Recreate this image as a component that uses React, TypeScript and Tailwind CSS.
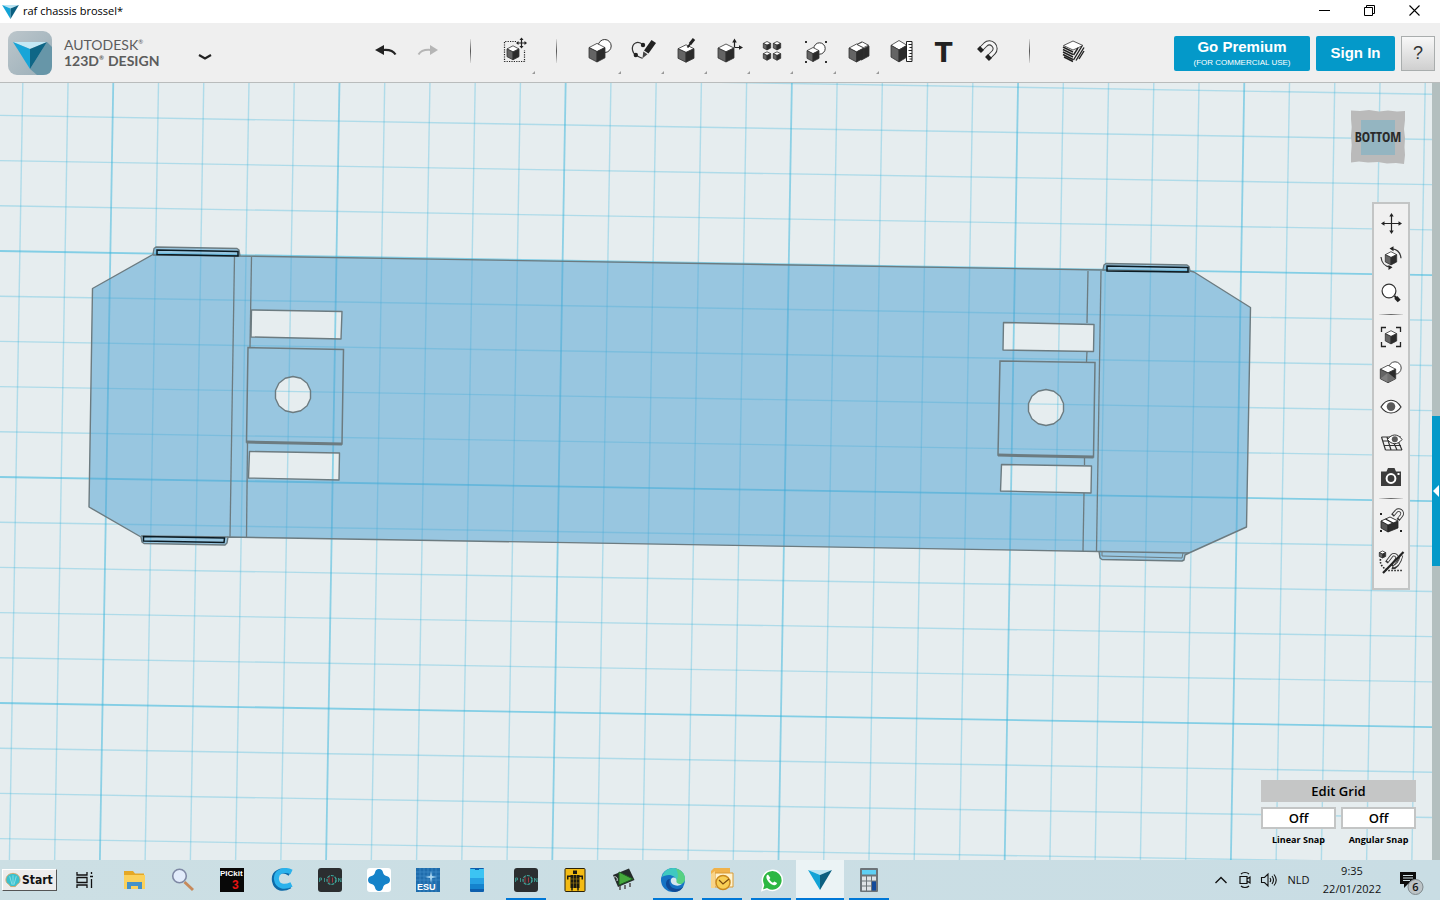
import React from "react";

const SANS = "font-['Open_Sans','Noto_Sans',sans-serif]";

type Pt = [number, number];
const pts = (p: Pt[]) => p.map(q => q.join(",")).join(" ");

function Icon({ children }: { children: React.ReactNode }) {
  return (
    <svg width="32" height="32" viewBox="0 0 32 32" fill="none" aria-hidden="true">
      {children}
    </svg>
  );
}

function TaskIcon({ children }: { children: React.ReactNode }) {
  return (
    <svg width="24" height="24" viewBox="0 0 24 24" fill="none" aria-hidden="true">
      {children}
    </svg>
  );
}

function Cube({ x, y, r, h }: { x: number; y: number; r: number; h: number }) {
  const up = y - h * 0.55;
  const down = y + h * 0.55;
  const mid = y - h * 0.12;
  return (
    <g stroke="#333" strokeWidth="0.8" strokeLinejoin="round">
      <polygon fill="#fff" points={pts([[x, y - h], [x + r, up], [x, mid], [x - r, up]])} />
      <polygon fill="#646464" points={pts([[x - r, up], [x, mid], [x, y + h], [x - r, down]])} />
      <polygon fill="#2b2b2b" points={pts([[x + r, up], [x, mid], [x, y + h], [x + r, down]])} />
    </g>
  );
}

function Logo() {
  return (
    <g>
      <polygon points="0,0 24,0 12,5" fill="#b9e4f3" />
      <polygon points="0,0 12,5 12,20" fill="#13a3d6" />
      <polygon points="24,0 12,5 12,20" fill="#0b5f80" />
    </g>
  );
}

function Magnet() {
  return (
    <g>
      <path d="M9 15 14.500 9.500A5.660 5.660 0 0 1 22.500 17.500L17 23" stroke="#3a3a3a" strokeWidth="5.200" />
      <path d="M9 15 14.500 9.500A5.660 5.660 0 0 1 22.500 17.500L17 23" stroke="#f6f6f6" strokeWidth="3.200" />
      <path d="m8 16 3-3M16 24l3-3" stroke="#222" strokeWidth="5.600" />
    </g>
  );
}

const tools = [
  {
    name: "Undo",
    icon: (
      <>
        <path d="M6 15 15 10v10z" fill="#222" />
        <path d="M14 15c6-.6 10 .4 12.500 4.500" stroke="#222" strokeWidth="2.200" />
      </>
    ),
  },
  {
    name: "Redo",
    icon: (
      <>
        <path d="M26 15 18 10v10z" fill="#b5b5b5" />
        <path d="M19 15c-6-.6-10 .4-12.500 4.500" stroke="#b5b5b5" strokeWidth="2" />
      </>
    ),
  },
  { name: "" },
  {
    name: "Transform",
    more: true,
    icon: (
      <>
        <path d="M18 6.500H6.500v20h20V15" stroke="#222" strokeWidth="1.200" strokeDasharray="1.200 1.200" />
        <Cube x={15} y={17.800} r={6} h={7} />
        <path d="M23.500 3.500v9M19 8h9" stroke="#222" strokeWidth="1.200" />
        <path d="m23.500 2.500 2 2.500h-4zM23.500 13.500l2-2.500h-4zM18 8l2.500-2v4zM29 8l-2.500-2v4z" fill="#222" />
      </>
    ),
  },
  { name: "" },
  {
    name: "Primitives",
    more: true,
    icon: (
      <>
        <circle cx="20.700" cy="11" r="6.500" fill="#fff" stroke="#333" />
        <Cube x={13} y={17.700} r={8} h={9.300} />
      </>
    ),
  },
  {
    name: "Sketch",
    more: true,
    icon: (
      <>
        <path d="M16 10C11 5 4.500 8 5.500 15c.6 3.500 2 4.500 4 5.500 3 1.500 5 3 6 2.500" stroke="#333" strokeWidth="1.200" />
        <circle cx="16" cy="10" r="2.200" fill="#222" />
        <circle cx="8.800" cy="20" r="2.200" fill="#222" />
        <path d="m24.500 5 4.500 3-7.500 10.500-4.500-3z" fill="#222" />
        <path d="m16.300 16.500 4.200 2.800-5 4z" fill="#444" />
      </>
    ),
  },
  {
    name: "Construct",
    more: true,
    icon: (
      <>
        <Cube x={16} y={18.500} r={8} h={8.700} />
        <path d="M24 4 20 9" stroke="#222" strokeWidth="3" />
        <path d="m20.500 8.500-3 4" stroke="#222" strokeWidth="1.800" />
      </>
    ),
  },
  {
    name: "Modify",
    more: true,
    icon: (
      <>
        <Cube x={13} y={18} r={8} h={9} />
        <path d="M21.500 12.500V6M21.500 12.500H27" stroke="#222" strokeWidth="1.200" />
        <path d="m21.500 3.500 2.300 4h-4.600zM30 12.500l-4-2.300v4.600z" fill="#222" />
      </>
    ),
  },
  {
    name: "Pattern",
    more: true,
    icon: (
      <>
        <Cube x={11} y={10.700} r={3.700} h={4.200} />
        <Cube x={21} y={10.700} r={3.700} h={4.200} />
        <Cube x={11} y={21} r={3.700} h={4.200} />
        <Cube x={21} y={21} r={3.700} h={4.200} />
      </>
    ),
  },
  {
    name: "Grouping",
    more: true,
    icon: (
      <>
        <path d="M6 6h2v2H6zM26 6h2v2h-2zM6 26h2v2H6zM26 26h2v2h-2z" fill="#333" />
        <circle cx="20.500" cy="13.500" r="5.700" fill="#fff" stroke="#333" />
        <Cube x={14} y={19.500} r={6} h={7} />
      </>
    ),
  },
  {
    name: "Combine",
    more: true,
    icon: (
      <>
        <Cube x={19.500} y={16} r={7.500} h={9} />
        <Cube x={14.500} y={18} r={7.500} h={9} />
        <path d="m15 9.500 5.500-2.500 6 3.200-5 2.500z" fill="#fff" stroke="#333" strokeWidth=".8" />
      </>
    ),
  },
  {
    name: "Measure",
    icon: (
      <>
        <Cube x={14} y={16.200} r={8} h={10.700} />
        <path d="M21.500 6.500h5.500v20h-5.500z" fill="#fff" stroke="#222" />
        <path d="M23.500 9.500H27M24.500 12.500H27M23.500 15.500H27M24.500 18.500H27M23.500 21.500H27M24.500 24H27" stroke="#222" />
      </>
    ),
  },
  { name: "Text", glyph: "T" },
  { name: "Snap", icon: <Magnet /> },
  { name: "" },
  {
    name: "Material",
    icon: (
      <>
        <path d="m16 5.500 10.500 5v10.500L16 27 6 21V10.500z" fill="#efefef" />
        <path d="m16 6 10 4.500L16 15 6.500 10.500z" fill="#fff" stroke="#333" strokeWidth=".8" />
        <path d="m6 12 10 5M6 14.500l10 5M6 17l10 5M6 19.500l10 5M7 22l9 4.500" stroke="#222" strokeWidth="1.400" />
        <path d="m16.500 20 4.500-7M16.500 25 25 11M19 25.500l8-13M22 24l5-8" stroke="#222" strokeWidth="1.400" />
      </>
    ),
  },
];

const navTools = [
  {
    name: "Pan",
    icon: (
      <>
        <path d="M16.500 8v17M8 16.500h17" stroke="#222" strokeWidth="1.200" />
        <path d="m16.500 6 2.200 3.500h-4.400zM16.500 27l2.200-3.500h-4.400zM6 16.500l3.500-2.200v4.400zM27 16.500l-3.500-2.200v4.400z" fill="#222" />
      </>
    ),
  },
  {
    name: "Orbit",
    icon: (
      <>
        <Cube x={16} y={16.300} r={5.700} h={6.600} />
        <path d="M17 6.800c5 .4 8.500 4 9 9.500M6 15c.5 5.500 4 9.500 9 10" stroke="#333" strokeWidth="1.200" />
        <path d="m14.500 6.600 4-2.300v5zM17.500 25.200l-4-2.300v5z" fill="#222" />
      </>
    ),
  },
  {
    name: "Zoom",
    icon: (
      <>
        <path d="m19.500 19 2 2" stroke="#222" strokeWidth="2" />
        <path d="m20.800 20.300 3.400 3.700" stroke="#222" strokeWidth="4" />
        <circle cx="14" cy="14" r="6.900" fill="#fff" stroke="#333" strokeWidth="1.200" />
      </>
    ),
  },
  { name: "" },
  {
    name: "Fit",
    icon: (
      <>
        <path d="M6.500 11V6.500H11M21 6.500h4.500V11M25.500 21v4.500H21M11 25.500H6.500V21" stroke="#222" strokeWidth="1.300" />
        <Cube x={16} y={16.300} r={5.700} h={6.600} />
      </>
    ),
  },
  {
    name: "View mode",
    icon: (
      <>
        <circle cx="20" cy="12" r="6.200" fill="#fff" stroke="#444" />
        <Cube x={13} y={18} r={7.700} h={8.700} />
        <path d="m13 16.800 7.500 6L13 26.500l-7.500-4z" fill="#8c8c8c" opacity=".7" />
      </>
    ),
  },
  {
    name: "Visibility",
    icon: (
      <>
        <path d="M6 16c5.500-9 14.500-9 20 0-5.500 8-14.500 8-20 0z" fill="#fff" stroke="#333" strokeWidth="1.200" />
        <circle cx="16" cy="15.600" r="4.300" fill="#5a5a5a" />
      </>
    ),
  },
  {
    name: "Grid visibility",
    icon: (
      <>
        <path d="M6.500 11H26M7.500 15H25M9 19.500h17M10.500 24H27M6.500 11l4 13M12 11l4 13M18 15l4 9M23 15l4 9" stroke="#333" strokeWidth="1.200" />
        <path d="M12.500 13.500c4-6 10.500-6 14.500 0-4 5.500-10.500 5.500-14.500 0z" fill="#fff" stroke="#333" />
        <circle cx="19.800" cy="13.200" r="3" fill="#5a5a5a" />
      </>
    ),
  },
  {
    name: "Screenshot",
    icon: (
      <>
        <path d="M6 10.500h5.500L13 7h6.500l1.500 3.500h5V25H6z" fill="#3c3c3c" />
        <circle cx="16" cy="17.500" r="4.400" stroke="#fff" strokeWidth="2" />
        <path d="M22.500 12h2v2h-2z" fill="#fff" />
      </>
    ),
  },
  { name: "" },
  {
    name: "Snap to object",
    icon: (
      <>
        <path d="M5 8h2v2H5zM5 25h2v2H5zM25 25h2v2h-2z" fill="#222" />
        <path d="m6 16 7 4v7l-7-4z" fill="#555" stroke="#222" strokeWidth=".8" />
        <path d="m13 20 10-4v7l-10 4z" fill="#2b2b2b" stroke="#222" strokeWidth=".8" />
        <path d="m6 16 9-4 8 4-10 4z" fill="#fff" stroke="#222" strokeWidth=".9" />
        <path d="m10.500 14 7.500 4" stroke="#222" strokeWidth="1.200" />
        <path d="m17.500 10.500 3.500-4A3.300 3.300 0 0 1 26.500 10.500L23 15" stroke="#333" strokeWidth="3.600" />
        <path d="m18.500 9.500 2.500-3A3.300 3.300 0 0 1 26.500 10.500L24 13.700" stroke="#f0f0f0" strokeWidth="1.900" />
      </>
    ),
  },
  {
    name: "Snap off",
    icon: (
      <>
        <Cube x={7.500} y={8.500} r={3.200} h={3.500} />
        <path d="M5.500 13c-1 6 3 9.500 8 11.500H27" stroke="#222" strokeWidth="1.600" strokeDasharray="1.600 1.400" />
        <path d="m11.500 16.500 5-6.500a3 3 0 0 1 5 3.500L17 20M17 21.500c3 1 8-4 9.500-12" stroke="#333" strokeWidth="3.400" />
        <path d="m12.500 15.200 4-5.200a3 3 0 0 1 5 3.500L18 18.500M18.500 20.800c3-1 6.500-5 8-10.800" stroke="#f0f0f0" strokeWidth="1.700" />
        <path d="M28.500 6 8 27" stroke="#222" strokeWidth="2.200" />
      </>
    ),
  },
];

const EDGE = "#6c7b80";

const holes: Pt[][] = [
  [[251.5, 310], [342, 311.5], [341, 339], [251, 337]],
  [[249.5, 451.5], [339.5, 453], [339, 480], [248.5, 478]],
  [[1003.5, 322.5], [1094, 324.5], [1093.5, 351.5], [1003, 350]],
  [[1001.5, 464.5], [1091.5, 466], [1091, 493], [1000.5, 491]],
  round(293, 394.5),
  round(1046, 407.5),
];

const plates: Pt[][] = [
  [[248, 347.5], [343.5, 349.5], [342, 444], [246.5, 442]],
  [[1000, 361], [1095, 362.5], [1093.5, 457], [998, 455]],
];

const outline: Pt[] = [
  [92.5, 288.5], [153, 254.5], [154, 248.5], [156, 247], [237, 248.5], [239, 250], [240, 256], [1103, 270],
  [1104, 265], [1106, 263.5], [1187, 265], [1189, 266.5], [1190, 271], [1194, 272], [1250.5, 307.5], [1246.5, 527],
  [1189, 553], [1185, 555], [1184, 560], [1182, 561], [1102, 559.5], [1100, 558], [1099, 551.5], [228, 537],
  [227, 543], [225, 545], [144, 543.5], [142, 542], [141, 537], [89, 507],
];

const seams: Pt[][] = [
  [[153, 255], [240, 256]], [[141, 536], [228, 537]], [[1103, 270], [1190, 272]], [[1099, 551.5], [1189, 553]],
  [[234.5, 256], [230, 537]], [[251.5, 257], [250, 348]], [[247.5, 443], [246.5, 537]],
  [[1088, 271], [1087, 323]], [[1087, 351], [1086.5, 362]], [[1084.5, 457], [1084.5, 465]],
  [[1084, 493], [1083, 551]], [[1101, 271], [1096.5, 551]],
];

function round(cx: number, cy: number): Pt[] {
  return Array.from({ length: 14 }, (_, i) => {
    const a = (i / 14) * Math.PI * 2 - Math.PI / 2;
    return [+(cx + 18 * Math.cos(a)).toFixed(1), +(cy + 18 * Math.sin(a)).toFixed(1)] as Pt;
  });
}

function Workspace() {
  const shape = [outline, ...holes].map(p => "M" + p.map(q => q.join(" ")).join("L") + "Z").join("");
  const cols = Array.from({ length: 36 }, (_, i) => i - 3);
  const rows = Array.from({ length: 20 }, (_, i) => i - 5);
  return (
    <svg className="block h-full w-full" viewBox="0 83 1432 777" preserveAspectRatio="xMinYMin slice" fill="none" role="img" aria-label="Chassis model, bottom view">
      <g stroke="#31b4dc">
        {cols.map(k => {
          const x = 114.7 + 45.24 * k;
          const major = k % 5 === 0;
          return <line key={"c" + k} x1={x} y1="0" x2={x - 15.5} y2="900" strokeWidth={major ? 1.8 : 1.4} opacity={major ? 0.5 : 0.3} />;
        })}
        {rows.map(k => {
          const y = 251 + 45.2 * k;
          const major = k % 5 === 0;
          return <line key={"r" + k} x1="0" y1={y} x2="1440" y2={y + 24.2} strokeWidth={major ? 1.8 : 1.4} opacity={major ? 0.55 : 0.3} />;
        })}
      </g>
      <path d={shape} fill="#4a9fd1" fillOpacity="0.5" fillRule="evenodd" />
      <path d={shape} stroke={EDGE} strokeWidth="1.4" strokeLinejoin="round" />
      {plates.map((p, i) => (
        <g key={i} stroke={EDGE}>
          <polygon points={pts(p)} strokeWidth="1.5" />
          <polyline points={pts([p[2], p[3]])} strokeWidth="3" />
        </g>
      ))}
      {seams.map((p, i) => (
        <polyline key={i} points={pts(p)} stroke={EDGE} strokeWidth="1.3" />
      ))}
      <g stroke="#0b1a22" strokeWidth="1.5">
        <polygon points="157,250 238,251.500 238,256 157,254.500" />
        <polygon points="143.500,536.500 224.500,538 224,542.500 143.500,541" />
        <polygon points="1107,266 1188,267.500 1188,272 1107,271" />
      </g>
      <polyline points="1102,552 1102,556 1182,558 1183,553" stroke={EDGE} />
    </svg>
  );
}

function ToolBar() {
  return (
    <header className="flex h-[60px] shrink-0 items-center border-b border-[#b9bcbc] bg-[#efefef] pr-[5px]">
      <div className="flex w-[363px] shrink-0 items-center pl-2">
        <svg width="44" height="44" viewBox="0 0 44 44" aria-hidden="true">
          <defs>
            <linearGradient id="tile" x1="0" y1="0" x2="1" y2="1">
              <stop offset="0" stopColor="#bcc6cb" />
              <stop offset="1" stopColor="#9aaeb8" />
            </linearGradient>
          </defs>
          <rect width="44" height="44" rx="9" fill="url(#tile)" />
          <path d="M39 11 44 16v19q0 9-9 9h-6l-7-6z" fill="#6796a8" />
          <path d="M5 11h34l-17 7z" fill="#c4e9f5" />
          <path d="m5 11 17 7v20z" fill="#18a5d8" />
          <path d="M39 11 22 18v20z" fill="#0e6686" />
        </svg>
        <h1 className="ml-3 w-[120px] font-['Lato',sans-serif] text-[14px] leading-4 whitespace-nowrap text-[#5c5c5c]">
          <span className="flex items-start">AUTODESK<span className="text-[6px] leading-[10px]">®</span></span>
          <span className="flex items-start font-bold">123D<span className="mr-1 text-[6px] leading-[10px]">®</span>DESIGN</span>
        </h1>
        <button aria-label="Main menu" className="ml-[13px] mt-2">
          <svg width="16" height="10" viewBox="0 0 16 10" fill="none" aria-hidden="true">
            <path d="m2 3 6 3.500L14 3" stroke="#222" strokeWidth="2.200" />
          </svg>
        </button>
      </div>
      <nav aria-label="Tools" className="flex h-full">
        {tools.map((t, i) =>
          t.name ? (
            <button key={i} aria-label={t.name} className="relative flex w-[43px] items-center justify-center pb-1">
              {t.glyph ? (
                <span className="pt-1 text-[26px] leading-8 font-bold text-[#222] font-['DejaVu_Sans',sans-serif]">{t.glyph}</span>
              ) : (
                <Icon>{t.icon}</Icon>
              )}
              {t.more && (
                <svg className="absolute right-0 bottom-2" width="3" height="3" aria-hidden="true">
                  <path d="M3 0v3H0z" fill="#999" />
                </svg>
              )}
            </button>
          ) : (
            <div key={i} className="flex w-[43px] items-center justify-center pb-1">
              <div className="h-6 w-px bg-linear-to-b from-[#dddddd] via-[#555555] to-[#dddddd]" />
            </div>
          )
        )}
      </nav>
      <div className="ml-auto flex gap-1.5 pt-px font-['Liberation_Sans',sans-serif] text-white">
        <button className="h-[35px] w-[136px] rounded-xs bg-[#0499c9]">
          <span className="block text-[15px] leading-5 font-bold">Go Premium</span>
          <span className="block text-[8px] leading-3">(FOR COMMERCIAL USE)</span>
        </button>
        <button className="h-[35px] w-[79px] rounded-xs bg-[#0499c9] text-[15px] font-bold">Sign In</button>
        <button aria-label="Help" className="h-[35px] w-[34px] border border-[#a9adad] bg-linear-to-b from-[#f8f8f8] to-[#cfcfcf] text-[18px] text-[#333]">?</button>
      </div>
    </header>
  );
}

function NavPanel() {
  return (
    <nav aria-label="Navigation" className="absolute top-[119px] right-[22px] flex w-[38px] flex-col items-center border-2 border-[#c3c5c5] bg-[#f0f0f0] pt-px pb-[9px]">
      {navTools.map((t, i) =>
        t.name ? (
          <button key={i} aria-label={t.name} className="flex h-[35px] items-center last:mt-1.5">
            <Icon>{t.icon}</Icon>
          </button>
        ) : (
          <div key={i} className="flex h-[9px] items-center">
            <div className="h-px w-6 bg-linear-to-r from-[#dddddd] via-[#666666] to-[#dddddd]" />
          </div>
        )
      )}
    </nav>
  );
}

function GridPanel() {
  return (
    <div className={`absolute right-4 bottom-[13px] w-[155px] text-center text-black ${SANS}`}>
      <button className="block h-[22px] w-full bg-[#c5c6c6] text-[13px] leading-[22px] font-semibold">Edit Grid</button>
      <div className="mt-[5px] grid grid-cols-2 gap-[5px]">
        {["Linear Snap", "Angular Snap"].map(label => (
          <div key={label}>
            <button aria-label={label} className="block h-[22px] w-full border-2 border-[#c3c5c5] bg-white text-[13px] leading-[18px] font-semibold">
              Off
            </button>
            <span className="mt-1 block text-[9px] leading-[14px] font-bold whitespace-nowrap">{label}</span>
          </div>
        ))}
      </div>
    </div>
  );
}

const picdyn = (
  <>
    <rect width="24" height="24" rx="3" fill="#2b2e30" />
    <circle cx="13.500" cy="12" r="4.500" stroke="#3fa79c" strokeWidth="1.200" strokeDasharray="3 1" />
    <path d="M11 9v6M14.500 9.500v5" stroke="#a33b42" />
    <path d="M1.500 14V10h2v2h-2M6.500 10v4M18 10v4M20.500 14v-4l2.500 4v-4" stroke="#3fa79c" strokeWidth=".8" />
  </>
);

const apps = [
  {
    name: "Task View",
    icon: <path d="M4 4v3h10V4M4 20v-3h10v3M4 9.500h10v5H4zM18.500 4v2M18.500 11v9M17 8.500h3" stroke="#111" strokeWidth="1.300" />,
  },
  {
    name: "File Explorer",
    icon: (
      <>
        <path d="M2 3h9l2 2.500h9V20H2z" fill="#e5a825" />
        <path d="M2 7h21v14H2z" fill="#fbd15b" />
        <path d="M5 21v-7h15v7h-4v-3h-7v3z" fill="#4491c9" />
      </>
    ),
  },
  {
    name: "Search",
    icon: (
      <>
        <path d="m13.500 14 8.500 8" stroke="#c7895a" strokeWidth="3" />
        <circle cx="8.500" cy="8" r="6.800" fill="#e2ecfb" stroke="#7f89a5" strokeWidth="1.600" />
      </>
    ),
  },
  {
    name: "PICkit 3",
    icon: (
      <>
        <rect width="24" height="24" fill="#080808" />
        <text x="0" y="8" fontSize="8" fill="#fff" fontFamily="Liberation Sans" fontWeight="700">PICkit</text>
        <text x="12" y="21" fontSize="12" fill="#e61414" fontFamily="Liberation Sans" fontWeight="700">3</text>
      </>
    ),
  },
  {
    name: "CCleaner",
    icon: (
      <>
        <path d="M21 5.500C12 0 4 5 5.500 13S14 22 21 18" stroke="#0d6aa8" strokeWidth="5" />
        <path d="M22.500 4C14 0 6.500 4.500 7.500 11.500S15 20 22.500 16.500" stroke="#2bb2ec" strokeWidth="5" />
      </>
    ),
  },
  { name: "Picdyn", icon: picdyn },
  {
    name: "Sync",
    icon: (
      <>
        <rect width="24" height="24" rx="3" fill="#fff" />
        <path d="M12 1c2.500 0 3.500 1.500 4 3.500.5 2 1.500 3 3.500 3.500S23 9.500 23 12s-1.500 3.500-3.500 4-3 1.500-3.500 3.500-1.500 3.500-4 3.500-3.500-1.500-4-3.500-1.500-3-3.500-3.500S1 14.500 1 12s1.500-3.500 3.500-4S7.500 6.500 8 4.500 9.500 1 12 1z" fill="#1683c9" />
      </>
    ),
  },
  {
    name: "ESU",
    icon: (
      <>
        <rect width="24" height="24" fill="#1f6cac" />
        <path d="M0 4h24M0 8h24M0 12h24M4 0v24M8 0v24M12 0v24M16 0v24M20 0v24" stroke="#3f8cc8" strokeWidth=".7" />
        <path d="m15 3 1 5 5 1-5 1-1 5-1-5-5-1 5-1z" fill="#a9d5f0" />
        <text x="1" y="22" fontSize="9" fill="#fff" fontFamily="Liberation Sans" fontWeight="700">ESU</text>
      </>
    ),
  },
  {
    name: "Your Phone",
    icon: (
      <>
        <rect x="5" width="14" height="24" rx="1" fill="#0d5fae" />
        <path d="M5 16h14v5H5z" fill="#1583cd" />
        <path d="M5 10h14v6H5z" fill="#26a1e3" />
        <path d="M5 1h14v9H5z" fill="#3cc4f3" />
        <path d="M10 1.500h4" stroke="#0d5fae" />
      </>
    ),
  },
  { name: "Picdyn editor", open: true, icon: picdyn },
  {
    name: "Rail",
    icon: (
      <>
        <rect x="2" y=".5" width="20" height="23" rx="1" fill="#f3bb14" stroke="#2b2208" />
        <path d="M10 2.500h4V6h-4zM7.500 7h9v13h-9zM4 7.500h4V9H4zM16 7.500h4V9h-4zM4 9h1.500v2.500H4zM18.500 9H20v2.500h-1.500z" fill="#1d1a10" />
        <path d="M10.500 7v13M13.500 7v13M7.500 11h9M7.500 15h9" stroke="#b98f14" strokeWidth=".5" />
        <path d="M9 20v2.500M15 20v2.500" stroke="#1d1a10" strokeWidth="1.500" />
      </>
    ),
  },
  {
    name: "PIC chip",
    icon: (
      <>
        <path d="m1 7 16-6.500 5.500 11.500L6 19z" fill="#252b2b" />
        <path d="M7 4 21 11 7 17z" fill="#45a83c" stroke="#1e5c22" />
        <path d="M8 18v4M13 17v4M18 15v4" stroke="#666" strokeWidth="1.800" />
        <path d="M2 9c2-1 4 1 3 4" stroke="#d9e2e2" />
      </>
    ),
  },
  {
    name: "Edge",
    open: true,
    icon: (
      <>
        <circle cx="12" cy="12" r="12" fill="#1673c4" />
        <path d="M1 9C3 2 9-1 15 .5c6 1.500 9 6 9 10.500 0 4-4 6-8 5-2-.5-2-2-1-3 1-3-3-6-7-6-3 0-5.500 1-7 2z" fill="#3fc9c0" />
        <path d="M15 .5c6 1.500 9 6 9 10.500 0 4-4 6-8 5-2-.5-2-2-1-3 3-4 2-8 0-12.500z" fill="#63d468" opacity=".7" />
        <path d="M9 11c-2 5 1 10 7 10 3 0 5-1 6.500-3-3 8-14 7.500-17 .5C4 14 6 11 9 11z" fill="#104a96" />
        <path d="M12 9.500c-3 1-3 5 0 7 2.500 1.500 6 1.500 9 0-4-.5-6-1.500-5.500-3.500.3-2-1-4-3.500-3.500z" fill="#d6e7ee" />
      </>
    ),
  },
  {
    name: "Outlook",
    open: true,
    icon: (
      <>
        <path d="M1 3 4 0h16v19H1z" fill="#f0b24a" />
        <path d="M5 5h18v14H5z" fill="#fff3cf" stroke="#d99a34" />
        <path d="m1 6 4-3v17H1z" fill="#f8d489" />
        <circle cx="13" cy="14.500" r="7" fill="#f8cf55" stroke="#c98a1f" strokeWidth="1.500" />
        <path d="m9 12 4 4 6-5" stroke="#7a4b10" strokeWidth="1.200" />
      </>
    ),
  },
  {
    name: "WhatsApp",
    open: true,
    icon: (
      <>
        <path d="M3 22.500 4.500 17A10 10 0 1 1 8 20.800z" fill="#2cb742" stroke="#fff" strokeWidth="1.500" />
        <path d="M9 6.500c-2 .8-2 3-1 5 1.500 3 4 5 7 5.700 1.500.3 3-1 3-2.200l-2.700-1.500-1.300 1.300c-1.600-.6-3-2-3.700-3.500L11.400 10z" fill="#fff" />
      </>
    ),
  },
  { name: "123D Design", open: true, active: true, icon: <g transform="translate(0 2)"><Logo /></g> },
  {
    name: "Calculator",
    open: true,
    icon: (
      <>
        <rect x="3" width="18" height="24" rx="1" fill="#6d7479" />
        <path d="M5 2h14v4.500H5z" fill="#5fd0f5" />
        <path d="M5 8.500h4v4H5zM10 8.500h4v4h-4zM15 8.500h4v4h-4zM5 13.500h4v4H5zM10 13.500h4v4h-4zM5 18.500h4v4H5zM10 18.500h4v4h-4z" fill="#dfe3e6" />
        <path d="M15 13.500h4v9h-4z" fill="#134a9a" />
      </>
    ),
  },
];

function TaskBar() {
  return (
    <footer className={`flex h-10 shrink-0 items-center bg-linear-to-r from-[#ccdfe4] to-[#c9dde4] text-[11px] text-[#111] ${SANS}`}>
      <button className="ml-0.5 flex h-[22px] w-[55px] items-center gap-px border border-t-white border-r-[#555] border-b-[#555] border-l-white bg-[#ececec] pl-0.5 text-[12px] font-bold whitespace-nowrap font-['DejaVu_Sans_Condensed','DejaVu_Sans',sans-serif]">
        <svg className="shrink-0" width="16" height="16" viewBox="0 0 17 16" aria-hidden="true">
          <path d="M8.500 1C13 1 16 4 16 8c0 2-1 3.500-3 4.500L11 15H6l-2-2.500C2 11.500 1 10 1 8c0-4 3-7 7.500-7z" fill="#39c1cf" stroke="#d2a467" />
          <path d="M8.500 3v10M5 4l2.500 9M12 4l-2.500 9" stroke="#a3e6ea" strokeWidth=".8" />
        </svg>
        Start
      </button>
      <div className="ml-1 flex h-full gap-px">
        {apps.map(a => (
          <button key={a.name} aria-label={a.name} className={`relative flex w-12 items-center justify-center ${a.active ? "bg-[#ebf3f5]" : ""}`}>
            <TaskIcon>{a.icon}</TaskIcon>
            {a.open && <span className={`absolute bottom-0 h-0.5 bg-[#0078d7] ${a.active ? "w-12" : "w-10"}`} />}
          </button>
        ))}
      </div>
      <div className="ml-auto flex h-full items-center">
        <button aria-label="Show hidden icons" className="w-6">
          <svg className="mx-auto" width="14" height="10" fill="none" aria-hidden="true">
            <path d="m1.500 8 5.500-5.500L12.500 8" stroke="#111" strokeWidth="1.400" />
          </svg>
        </button>
        <button aria-label="Meet Now" className="w-6">
          <svg className="mx-auto" width="14" height="18" viewBox="0 0 14 18" fill="none" stroke="#111" aria-hidden="true">
            <path d="M2 5.500h7v7H2zM9 8l3-2v6l-3-2M3 3c2-2 6-2 8 0M3 15c2 2 6 2 8 0" strokeWidth="1.200" />
          </svg>
        </button>
        <button aria-label="Volume" className="w-6">
          <svg className="mx-auto" width="18" height="16" viewBox="0 0 18 16" fill="none" stroke="#111" aria-hidden="true">
            <path d="M1.500 5.500h3l3.500-3.500v12l-3.500-3.500h-3zM10 6q1.500 2 0 4M12 4q3 4 0 8M14 2.500q4.500 5.500 0 11" strokeWidth="1.100" />
          </svg>
        </button>
        <span className="w-[35px] text-center">NLD</span>
        <time className="w-[72px] text-center leading-[18px]">
          9:35
          <br />
          22/01/2022
        </time>
        <button aria-label="6 notifications" className="ml-2 h-10 w-11">
          <svg width="26" height="26" viewBox="0 0 26 26" className="mt-1 ml-1" aria-hidden="true">
            <path d="M0 3h16v12H8l-4 4v-4H0z" fill="#0d0d0d" />
            <path d="M3 6.500h10M3 9h10M3 11.500h7" stroke="#cfe0e5" />
            <circle cx="15.500" cy="18" r="7.500" fill="#bcc3c6" stroke="#7d878b" />
            <text x="15.500" y="22" fontSize="11" textAnchor="middle" fontFamily="Open Sans" fontWeight="600" fill="#111">6</text>
          </svg>
        </button>
      </div>
    </footer>
  );
}

export default function App() {
  return (
    <div className="flex h-screen flex-col overflow-hidden bg-white">
      <div className={`flex h-[23px] shrink-0 items-center pr-[3px] text-[11px] text-black ${SANS}`}>
        <svg className="mr-1 ml-0.5" width="17" height="14" viewBox="0 0 24 20" aria-hidden="true">
          <Logo />
        </svg>
        <span>raf chassis brossel*</span>
        <div className="ml-auto flex h-full pb-0.5">
          <button aria-label="Minimize" className="flex w-[45px] items-center justify-center">
            <svg width="11" height="11" aria-hidden="true"><path d="M0 5.500h11" stroke="#000" /></svg>
          </button>
          <button aria-label="Restore" className="flex w-[45px] items-center justify-center">
            <svg width="11" height="11" fill="none" stroke="#000" aria-hidden="true"><path d="M.5 2.500h8v8h-8zM2.500 2.500v-2h8v8h-2" /></svg>
          </button>
          <button aria-label="Close" className="flex w-[45px] items-center justify-center">
            <svg width="11" height="11" stroke="#000" aria-hidden="true"><path d="m.5.500 10 10M10.500.500l-10 10" strokeWidth="1.100" /></svg>
          </button>
        </div>
      </div>
      <ToolBar />
      <main className="flex min-h-0 flex-1">
        <div className="relative min-w-0 flex-1 bg-[#e6edef]">
          <Workspace />
          <svg className="absolute top-[26px] right-[26px]" width="56" height="56" viewBox="0 0 56 56" role="img" aria-label="View cube">
            <path d="M1 1.500l9 .5 9-1 10 1.500 9-1 9 1 8-.5v9l-1 9 1 9-.5 9 .5 8-1 9-8-1-9 .5-9-1.500-10 .5-9-1-8 1V45l.7-9-.7-9 .7-9-.7-8z" fill="#bababa" />
            <rect x="11" y="11" width="34" height="35" fill="#94b5c1" />
            <text x="28" y="33" fontSize="14" textAnchor="middle" fontWeight="700" fontFamily="Open Sans Condensed, DejaVu Sans Condensed, sans-serif" fill="#2a2a2a">BOTTOM</text>
          </svg>
          <NavPanel />
          <GridPanel />
        </div>
        <aside className="w-2 bg-[#b3bfbf]">
          <button aria-label="Open parts panel" className="mt-[333px] flex h-[150px] w-2 items-center bg-[#0499c9]">
            <svg width="8" height="12" aria-hidden="true"><path d="M7 0v12L1 6z" fill="#fff" /></svg>
          </button>
        </aside>
      </main>
      <TaskBar />
    </div>
  );
}
